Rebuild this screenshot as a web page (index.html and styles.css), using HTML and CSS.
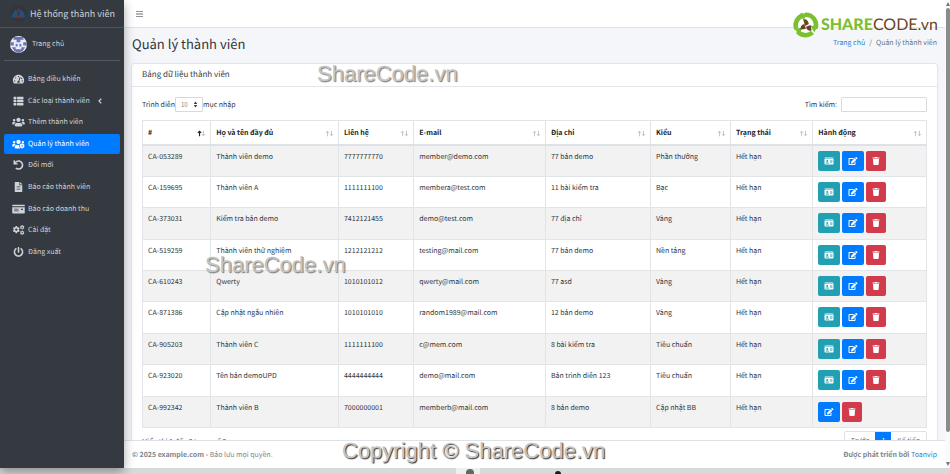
FILE: index.html
```html
<!DOCTYPE html>
<html lang="vi">
<head>
<meta charset="utf-8">
<meta name="viewport" content="width=device-width, initial-scale=1">
<title>Quản lý thành viên</title>
<link rel="stylesheet" href="styles.css">
</head>
<body>
<svg class="sprite" aria-hidden="true">
  <symbol id="i-bars" viewBox="0 0 448 512"><path d="M0 76h448v50H0zM0 231h448v50H0zM0 386h448v50H0z"/></symbol>
  <symbol id="i-dash" viewBox="0 0 576 512"><path fill-rule="evenodd" d="M288 32C129 32 0 161 0 320c0 53 14 102 39 145 6 9 16 15 27 15h444c11 0 21-6 27-15 25-43 39-92 39-145C576 161 447 32 288 32zm0 64c18 0 32 14 32 32s-14 32-32 32-32-14-32-32 14-32 32-32zM96 384c-18 0-32-14-32-32s14-32 32-32 32 14 32 32-14 32-32 32zm48-160c-18 0-32-14-32-32s14-32 32-32 32 14 32 32-14 32-32 32zm247-40l-61 184c14 12 22 29 22 48 0 12-3 23-9 32H233c-6-9-9-20-9-32 0-34 27-62 61-64l60-183c10-30 56-16 46 15zm23 58l15-46c21-11 51 4 51 28 0 30-41 43-66 18zm66 142c-18 0-32-14-32-32s14-32 32-32 32 14 32 32-14 32-32 32z"/></symbol>
  <symbol id="i-list" viewBox="0 0 512 512"><path d="M24 32h101q24 0 24 24v80q0 24-24 24H24q-24 0-24-24V56q0-24 24-24zM206 32h282q24 0 24 24v80q0 24-24 24H206q-24 0-24-24V56q0-24 24-24zM24 192h101q24 0 24 24v80q0 24-24 24H24q-24 0-24-24v-80q0-24 24-24zM206 192h282q24 0 24 24v80q0 24-24 24H206q-24 0-24-24v-80q0-24 24-24zM24 352h101q24 0 24 24v80q0 24-24 24H24q-24 0-24-24v-80q0-24 24-24zM206 352h282q24 0 24 24v80q0 24-24 24H206q-24 0-24-24v-80q0-24 24-24z"/></symbol>
  <symbol id="i-users" viewBox="0 0 640 512"><path d="M96 224c35.300 0 64-28.700 64-64s-28.700-64-64-64-64 28.700-64 64 28.700 64 64 64zm448 0c35.300 0 64-28.700 64-64s-28.700-64-64-64-64 28.700-64 64 28.700 64 64 64zm32 32h-64c-17.600 0-33.500 7.100-45.100 18.600 40.300 22.100 68.900 62 75.100 109.400h66c17.700 0 32-14.300 32-32v-32c0-35.300-28.700-64-64-64zm-256 0c61.900 0 112-50.100 112-112S381.900 32 320 32 208 82.100 208 144s50.100 112 112 112zm76.800 32h-8.300c-20.800 10-43.900 16-68.500 16s-47.600-6-68.500-16h-8.300C179.600 288 128 339.600 128 403.200V432c0 26.500 21.500 48 48 48h288c26.500 0 48-21.500 48-48v-28.800c0-63.600-51.600-115.200-115.200-115.200zm-223.700-13.400C161.500 263.100 145.600 256 128 256H64c-35.300 0-64 28.700-64 64v32c0 17.700 14.300 32 32 32h65.900c6.300-47.400 34.900-87.300 75.200-109.400z"/></symbol>
  <symbol id="i-users-cog" viewBox="0 0 640 512"><path d="M96 224a64 64 0 1 0 0-128 64 64 0 0 0 0 128zM320 256a112 112 0 1 0 0-224 112 112 0 0 0 0 224zM544 224a64 64 0 1 0 0-128 64 64 0 0 0-62 80q30 18 62 48zM173 275q-18-19-45-19H64q-64 0-64 64v32q0 32 32 32h66q10-72 75-109zM243 288q-115 0-115 115v29q0 48 48 48h240q-40-30-38-75-50-20-20-80l25-32q-63 20-140-5z"/><path fill-rule="evenodd" d="M478 222h52l8 36 26 15 35-11 31 55-27 25v30l27 25-31 55-35-11-26 15-8 36h-52l-8-36-26-15-35 11-31-55 27-25v-30l-27-25 31-55 35 11 26-15zm26 95a40 40 0 1 0 0 80 40 40 0 0 0 0-80z"/></symbol>
  <symbol id="i-undo" viewBox="0 0 512 512"><path d="M0 12h72v92C116 47 178 8 256 8c137 0 248 111 248 248S393 504 256 504c-64 0-122-24-166-64l58-58c28 26 66 40 108 40 92 0 166-74 166-166S348 90 256 90c-56 0-102 28-132 72h94v72H0z"/></symbol>
  <symbol id="i-file" viewBox="0 0 384 512"><path fill-rule="evenodd" d="M224 136V0H24C10.700 0 0 10.700 0 24v464c0 13.300 10.700 24 24 24h336c13.300 0 24-10.700 24-24V160H248c-13.200 0-24-10.800-24-24zM96 224h192v32H96zM96 288h192v32H96zM96 352h192v32H96zM384 122v6H256V0h6q10 0 17 7l98 98q7 7 7 17z"/></symbol>
  <symbol id="i-check" viewBox="0 0 640 512"><path fill-rule="evenodd" d="M0 448q0 32 32 32h576q32 0 32-32V160H0zM96 240h224v40H96zM448 240h96v70h-96zM96 336h240v36H96zM24 32h592q24 0 24 24v56H0V56q0-24 24-24z"/></symbol>
  <symbol id="i-cogs" viewBox="0 0 640 512"><path fill-rule="evenodd" d="M170 50h76l10 55 38 22 52-18 38 66-42 36v50l42 36-38 66-52-18-38 22-10 55h-76l-10-55-38-22-52 18-38-66 42-36v-50l-42-36 38-66 52 18 38-22zm38 126a60 60 0 1 0 0 120 60 60 0 0 0 0-120zM487 0h42l8 34 24 14 34-11 22 38-25 24v28l25 24-22 38-34-11-24 14-8 34h-42l-8-34-24-14-34 11-22-38 25-24V99l-25-24 22-38 34 11 24-14zm21 78a35 35 0 1 0 0 70 35 35 0 0 0 0-70zM487 286h42l8 34 24 14 34-11 22 38-25 24v28l25 24-22 38-34-11-24 14-8 34h-42l-8-34-24-14-34 11-22-38 25-24v-28l-25-24 22-38 34 11 24-14zm21 78a35 35 0 1 0 0 70 35 35 0 0 0 0-70z"/></symbol>
  <symbol id="i-power" viewBox="0 0 512 512"><path d="M400 54.100c63 45 104 118.600 104 201.900 0 136.800-110.800 247.700-247.500 248C120 504.300 8.200 393 8 256.400 7.900 173.100 48.900 99.300 111.800 54.200c11.700-8.300 28-4.800 35 7.700L162.600 90c5.900 10.500 3.100 23.800-6.600 31-41.500 30.800-68 79.600-68 134.900-.1 92.300 74.500 168.100 168 168.100 91.600 0 168.600-74.200 168-169.100-.3-51.800-24.700-101.800-68.100-134-9.700-7.200-12.400-20.500-6.500-30.900l15.800-28.100c7-12.400 23.200-16.100 34.800-7.800zM296 264V24c0-13.300-10.700-24-24-24h-32c-13.300 0-24 10.700-24 24v240c0 13.300 10.700 24 24 24h32c13.300 0 24-10.700 24-24z"/></symbol>
  <symbol id="i-left" viewBox="0 0 256 512"><path d="M180 80l56 56-120 120 120 120-56 56L10 256z"/></symbol>
  <symbol id="i-card" viewBox="0 0 576 512"><path fill-rule="evenodd" d="M48 32h480q48 0 48 48v16H0V80q0-48 48-48zM0 128h576v304q0 48-48 48H48q-48 0-48-48zm176 64a64 64 0 1 0 0 128 64 64 0 0 0 0-128zM64 416h224q0-72-64-72h-96q-64 0-64 72zM352 192h160v36H352zM352 256h160v36H352zM352 320h160v36H352z"/></symbol>
  <symbol id="i-edit" viewBox="0 0 576 512"><path d="M402.600 83.200l90.200 90.200c3.800 3.800 3.800 10 0 13.800L274.400 405.600l-92.800 10.300c-12.400 1.400-22.900-9.100-21.500-21.500l10.300-92.800L388.800 83.200c3.800-3.800 10-3.800 13.800 0zm162-22.900l-48.800-48.800c-15.200-15.200-39.900-15.200-55.200 0l-35.400 35.400c-3.800 3.800-3.800 10 0 13.800l90.200 90.200c3.800 3.800 10 3.800 13.800 0l35.400-35.400c15.200-15.300 15.200-40 0-55.200zM384 346.200V448H64V128h229.800c3.200 0 6.200-1.300 8.500-3.500l40-40c7.600-7.600 2.200-20.500-8.500-20.500H48C21.500 64 0 85.500 0 112v352c0 26.500 21.500 48 48 48h352c26.500 0 48-21.500 48-48V306.200c0-10.700-12.900-16-20.500-8.500l-40 40c-2.200 2.300-3.500 5.300-3.500 8.500z"/></symbol>
  <symbol id="i-trash" viewBox="0 0 448 512"><path d="M432 32H312l-9.400-18.700A24 24 0 0 0 281.100 0H166.800a23.720 23.720 0 0 0-21.400 13.300L136 32H16A16 16 0 0 0 0 48v32a16 16 0 0 0 16 16h416a16 16 0 0 0 16-16V48a16 16 0 0 0-16-16zM53.200 467a48 48 0 0 0 47.900 45h245.800a48 48 0 0 0 47.900-45L416 128H32z"/></symbol>
  <symbol id="i-sort" viewBox="0 0 16 12"><path d="M4.500 11V2M1.500 5l3-3 3 3"/><path d="M11.500 1v9M8.500 7l3 3 3-3"/></symbol>
  <symbol id="i-sort-up" viewBox="0 0 16 12"><path d="M4.500 11V2M1.500 5l3-3 3 3" stroke="#222" stroke-width="2"/><path d="M11.500 1v9M8.500 7l3 3 3-3"/></symbol>
</svg>

<div class="screen">
  <div class="app">
    <aside class="sidebar">
      <a class="brand" href="#">
        <svg class="brand-logo" viewBox="0 0 32 32" aria-hidden="true"><circle cx="16" cy="16" r="15" fill="#30363d"/><path d="M11 8l4 7-3 9-9-1q1-8 8-15z" fill="#24507f"/><path d="M21 8l-4 7 3 9 9-1q-1-8-8-15z" fill="#24507f"/><path d="M13 7h6l-3 8zM9 24l6-7 1 8zM23 24l-6-7-1 8z" fill="#70353c"/></svg>
        <span>Hệ thống thành viên</span>
      </a>
      <a class="user" href="#">
        <svg class="avatar" viewBox="0 0 36 36" aria-hidden="true"><circle cx="18" cy="18" r="18" fill="#e9ebf5"/><path d="M9 2h18l2 6h-7v5h-8V8H7zM1 13h7v7H0zM28 13h7l1 7h-8zM12 17h4v5h-4zM20 17h4v5h-4zM4 24h8v4h12v-4h8l-5 8-9 4-9-4z" fill="#6974b8"/></svg>
        <span>Trang chủ</span>
      </a>
      <nav>
        <ul class="menu">
          <li><a href="#"><svg><use href="#i-dash"/></svg><span>Bảng điều khiển</span></a></li>
          <li><a href="#"><svg><use href="#i-list"/></svg><span>Các loại thành viên</span><svg class="caret"><use href="#i-left"/></svg></a></li>
          <li><a href="#"><svg><use href="#i-users"/></svg><span>Thêm thành viên</span></a></li>
          <li><a class="active" href="#"><svg><use href="#i-users-cog"/></svg><span>Quản lý thành viên</span></a></li>
          <li><a href="#"><svg><use href="#i-undo"/></svg><span>Đổi mới</span></a></li>
          <li><a href="#"><svg><use href="#i-file"/></svg><span>Báo cáo thành viên</span></a></li>
          <li><a href="#"><svg><use href="#i-check"/></svg><span>Báo cáo doanh thu</span></a></li>
          <li><a href="#"><svg><use href="#i-cogs"/></svg><span>Cài đặt</span></a></li>
          <li><a href="#"><svg><use href="#i-power"/></svg><span>Đăng xuất</span></a></li>
        </ul>
      </nav>
    </aside>

    <div class="page">
      <header class="topbar">
        <button class="toggle" type="button" aria-label="Menu"><svg><use href="#i-bars"/></svg></button>
      </header>
      <main class="content">
        <div class="heading">
          <h1>Quản lý thành viên</h1>
          <div class="crumbs"><a href="#">Trang chủ</a><span>/</span><span>Quản lý thành viên</span></div>
        </div>
        <section class="card">
          <h2>Bảng dữ liệu thành viên</h2>
          <div class="card-body">
            <div class="controls">
              <div class="length">
                <label for="length">Trình diễn</label>
                <span class="select"><select id="length"><option>10</option><option>25</option></select><svg viewBox="0 0 8 12" aria-hidden="true"><path d="M4 1l3 4H1zM4 11l3-4H1z"/></svg></span>
                <span>mục nhập</span>
              </div>
              <div class="search"><label for="search">Tìm kiếm:</label><input id="search" type="search"></div>
            </div>
            <table>
              <colgroup><col class="c-id"><col class="c-name"><col class="c-phone"><col class="c-mail"><col class="c-addr"><col class="c-type"><col class="c-state"><col class="c-act"></colgroup>
              <thead><tr>
                <th><div>#<svg><use href="#i-sort-up"/></svg></div></th>
                <th><div>Họ và tên đầy đủ<svg><use href="#i-sort"/></svg></div></th>
                <th><div>Liên hệ<svg><use href="#i-sort"/></svg></div></th>
                <th><div>E-mail<svg><use href="#i-sort"/></svg></div></th>
                <th><div>Địa chỉ<svg><use href="#i-sort"/></svg></div></th>
                <th><div>Kiểu<svg><use href="#i-sort"/></svg></div></th>
                <th><div>Trạng thái<svg><use href="#i-sort"/></svg></div></th>
                <th><div>Hành động<svg><use href="#i-sort"/></svg></div></th>
              </tr></thead>
              <tbody>
                <tr><td>CA-053289</td><td>Thành viên demo</td><td>7777777770</td><td>member@demo.com</td><td>77 bản demo</td><td>Phần thưởng</td><td>Hết hạn</td><td><div class="actions"><button type="button" class="info" aria-label="Thẻ"><svg><use href="#i-card"/></svg></button><button type="button" class="edit" aria-label="Sửa"><svg><use href="#i-edit"/></svg></button><button type="button" class="delete" aria-label="Xóa"><svg><use href="#i-trash"/></svg></button></div></td></tr>
                <tr><td>CA-159695</td><td>Thành viên A</td><td>1111111100</td><td>membera@test.com</td><td>11 bài kiểm tra</td><td>Bạc</td><td>Hết hạn</td><td><div class="actions"><button type="button" class="info" aria-label="Thẻ"><svg><use href="#i-card"/></svg></button><button type="button" class="edit" aria-label="Sửa"><svg><use href="#i-edit"/></svg></button><button type="button" class="delete" aria-label="Xóa"><svg><use href="#i-trash"/></svg></button></div></td></tr>
                <tr><td>CA-373031</td><td>Kiểm tra bản demo</td><td>7412121455</td><td>demo@test.com</td><td>77 địa chỉ</td><td>Vàng</td><td>Hết hạn</td><td><div class="actions"><button type="button" class="info" aria-label="Thẻ"><svg><use href="#i-card"/></svg></button><button type="button" class="edit" aria-label="Sửa"><svg><use href="#i-edit"/></svg></button><button type="button" class="delete" aria-label="Xóa"><svg><use href="#i-trash"/></svg></button></div></td></tr>
                <tr><td>CA-519259</td><td>Thành viên thử nghiệm</td><td>1212121212</td><td>testing@mail.com</td><td>77 bản demo</td><td>Nền tảng</td><td>Hết hạn</td><td><div class="actions"><button type="button" class="info" aria-label="Thẻ"><svg><use href="#i-card"/></svg></button><button type="button" class="edit" aria-label="Sửa"><svg><use href="#i-edit"/></svg></button><button type="button" class="delete" aria-label="Xóa"><svg><use href="#i-trash"/></svg></button></div></td></tr>
                <tr><td>CA-610243</td><td>Qwerty</td><td>1010101012</td><td>qwerty@mail.com</td><td>77 asd</td><td>Vàng</td><td>Hết hạn</td><td><div class="actions"><button type="button" class="info" aria-label="Thẻ"><svg><use href="#i-card"/></svg></button><button type="button" class="edit" aria-label="Sửa"><svg><use href="#i-edit"/></svg></button><button type="button" class="delete" aria-label="Xóa"><svg><use href="#i-trash"/></svg></button></div></td></tr>
                <tr><td>CA-871386</td><td>Cập nhật ngẫu nhiên</td><td>1010101010</td><td>random1989@mail.com</td><td>12 bản demo</td><td>Vàng</td><td>Hết hạn</td><td><div class="actions"><button type="button" class="info" aria-label="Thẻ"><svg><use href="#i-card"/></svg></button><button type="button" class="edit" aria-label="Sửa"><svg><use href="#i-edit"/></svg></button><button type="button" class="delete" aria-label="Xóa"><svg><use href="#i-trash"/></svg></button></div></td></tr>
                <tr><td>CA-905203</td><td>Thành viên C</td><td>1111111100</td><td>c@mem.com</td><td>8 bài kiểm tra</td><td>Tiêu chuẩn</td><td>Hết hạn</td><td><div class="actions"><button type="button" class="info" aria-label="Thẻ"><svg><use href="#i-card"/></svg></button><button type="button" class="edit" aria-label="Sửa"><svg><use href="#i-edit"/></svg></button><button type="button" class="delete" aria-label="Xóa"><svg><use href="#i-trash"/></svg></button></div></td></tr>
                <tr><td>CA-923020</td><td>Tên bản demoUPD</td><td>4444444444</td><td>demo@mail.com</td><td>Bản trình diễn 123</td><td>Tiêu chuẩn</td><td>Hết hạn</td><td><div class="actions"><button type="button" class="info" aria-label="Thẻ"><svg><use href="#i-card"/></svg></button><button type="button" class="edit" aria-label="Sửa"><svg><use href="#i-edit"/></svg></button><button type="button" class="delete" aria-label="Xóa"><svg><use href="#i-trash"/></svg></button></div></td></tr>
                <tr><td>CA-992342</td><td>Thành viên B</td><td>7000000001</td><td>memberb@mail.com</td><td>8 bản demo</td><td>Cập nhật BB</td><td>Hết hạn</td><td><div class="actions"><button type="button" class="edit" aria-label="Sửa"><svg><use href="#i-edit"/></svg></button><button type="button" class="delete" aria-label="Xóa"><svg><use href="#i-trash"/></svg></button></div></td></tr>
              </tbody>
            </table>
            <div class="table-foot">
              <div class="summary">Hiển thị 1 đến 9 trong số 9 mục</div>
              <div class="pager"><a href="#">Trước</a><a class="current" href="#">1</a><a href="#">Kế tiếp</a></div>
            </div>
          </div>
        </section>
      </main>
      <footer class="footer">
        <div><strong>© 2025 example.com -</strong> Bảo lưu mọi quyền.</div>
        <div><strong>Được phát triển bởi</strong> <a href="#">Toanvip</a></div>
      </footer>
    </div>
    <div class="scrollbar" aria-hidden="true"><i class="arrow-up"></i><i class="thumb"></i><i class="arrow-down"></i></div>
  </div>
  <div class="taskbar" aria-hidden="true"><svg viewBox="0 0 120 6"><path d="M0 0h24v6H0z" fill="#eee"/><circle cx="14" cy="5" r="4" fill="#5d6b58"/><circle cx="102" cy="6" r="3" fill="#1c1c1c"/></svg></div>

  <div class="sharecode">
    <svg viewBox="0 0 28 28" aria-hidden="true"><circle cx="14" cy="14" r="14" fill="#fff"/><g fill="none" stroke="#7bc030" stroke-width="5"><path d="M3.500 18A11 11 0 0 1 10 4"/><path d="M13 3A11 11 0 0 1 24 18"/><path d="M21 22A11 11 0 0 1 5 21"/></g><path d="M8 1l8 1-5 7zM27 14l-4 8-4-7zM1 18l8-1-1 8z" fill="#7bc030"/><path d="M11 8q5-1 6 5l-4 2zM8 19q0-5 4-6l2 5zM20 20q-5 1-6-4l5-2z" fill="#6b4423"/></svg>
    <span><b>SHARE</b>CODE.vn</span>
  </div>
  <div class="mark mark-top">ShareCode.vn</div>
  <div class="mark mark-mid">ShareCode.vn</div>
  <div class="mark mark-bottom">Copyright © ShareCode.vn</div>
</div>
</body>
</html>
```
FILE: styles.css
```css
* { box-sizing: border-box; }
body {
  margin: 0;
  font-family: "Noto Sans CJK JP", "Noto Sans", sans-serif;
  font-size: 7px;
  line-height: 12px;
  color: #33373c;
  text-rendering: geometricPrecision;
}
a { color: #3182ce; text-decoration: none; }
svg { display: block; fill: currentColor; }
button, input, select { font: inherit; color: inherit; }
button { cursor: pointer; }
.sprite { position: absolute; width: 0; height: 0; }

.screen { position: relative; display: flex; flex-direction: column; height: 100vh; overflow: hidden; }
.app { flex: 1; min-height: 0; display: flex; }

/* Sidebar */
.sidebar { flex: none; width: 124px; background: #343a40; color: #ced3da; box-shadow: 0 4px 10px rgba(0, 0, 0, .35); z-index: 1; }
.sidebar a { color: inherit; }
.brand { display: flex; align-items: center; gap: 3px; height: 28px; padding-left: 10px; border-bottom: 1px solid #4b545c; font-size: 9px; white-space: nowrap; }
.brand-logo { width: 17px; height: 17px; }
.user { display: flex; align-items: center; gap: 5px; height: 33px; margin: 0 4px; padding-left: 6px; border-bottom: 1px solid #4f5962; }
.avatar { width: 17px; height: 17px; }
.menu { list-style: none; margin: 8px 4px 0; padding: 0; height: 193px; display: grid; grid-auto-rows: 1fr; gap: 1px; }
.menu a { display: flex; align-items: center; gap: 3px; height: 100%; padding-left: 8px; border-radius: 2px; white-space: nowrap; }
.menu svg { width: 13px; height: 10px; }
.menu .caret { width: 8px; height: 8px; margin-left: 3px; }
.menu .active { background: #007bff; color: #fff; }

/* Page */
.page { flex: 1; min-width: 0; display: flex; flex-direction: column; background: #f4f6f9; }
.topbar { flex: none; display: flex; align-items: center; height: 28px; padding-left: 12px; background: #fff; border-bottom: 1px solid #dee2e6; }
.toggle { padding: 0; border: 0; background: none; color: #6c7075; }
.toggle svg { width: 7px; height: 8px; }
.content { flex: 1; min-height: 0; overflow: hidden; padding: 0 8px; }
.heading { display: flex; justify-content: space-between; align-items: center; height: 36px; }
h1 { margin: 0; padding-bottom: 4px; font-size: 13px; line-height: 20px; font-weight: 400; }
.crumbs { display: flex; gap: 4px; padding-bottom: 7px; color: #6c757d; }
.card { background: #fff; border-radius: 2px; box-shadow: 0 0 2px rgba(0, 0, 0, .25); }
h2 { margin: 0; padding: 5px 10px; font-size: 8px; line-height: 12px; font-weight: 400; border-bottom: 1px solid #e3e5e7; }
.card-body { padding: 10px; }
.controls { display: flex; justify-content: space-between; align-items: center; height: 15px; margin-bottom: 8px; }
.length, .search { display: flex; align-items: center; }
.select { position: relative; }
.select select { display: block; appearance: none; width: 28px; height: 15px; padding: 0 0 0 5px; border: 1px solid #d5d9dd; border-radius: 1px; background: #fff; color: #888; font-size: 6px; }
.select svg { position: absolute; right: 5px; top: 4px; width: 5px; height: 7px; color: #343a40; pointer-events: none; }
.search { gap: 4px; }
.search input { width: 86px; height: 15px; padding: 0 4px; border: 1px solid #d9dcdf; border-radius: 1px; background: #fff; }

table { width: 100%; height: 308px; border-collapse: collapse; table-layout: fixed; }
th, td { border: 1px solid #e2e5e8; padding: 5px; text-align: left; vertical-align: top; white-space: nowrap; }
th { height: 24px; padding: 6px 4px 4px 5px; border-bottom: 2px solid #dee2e6; font-weight: 700; color: #212529; }
th div { display: flex; justify-content: space-between; align-items: center; }
th svg { width: 9px; height: 7px; fill: none; stroke: #b8bcc0; stroke-width: 1.500; }
tbody tr:nth-child(odd) { background: #f2f2f2; }
.c-id { width: 8.700%; }
.c-name { width: 16.300%; }
.c-phone { width: 9.600%; }
.c-mail { width: 16.800%; }
.c-addr { width: 13.400%; }
.c-type { width: 10.200%; }
.c-state { width: 10.500%; }
.c-act { width: 14.500%; }
.actions { display: flex; gap: 2px; }
.actions button { display: grid; place-items: center; width: 22px; height: 20px; padding: 0; border: 0; border-radius: 2px; color: #fff; }
.actions svg { width: 10px; height: 8px; }
.actions .info { background: #219fb3; }
.actions .edit { background: #007bff; }
.actions .delete { width: 20px; background: #d13b4b; }

.table-foot { display: flex; justify-content: space-between; margin-top: 3px; }
.summary { padding-top: 5px; }
.pager { display: flex; height: 20px; border: 1px solid #dee2e6; border-radius: 2px; }
.pager a { padding: 3px 6px; color: #6c757d; }
.pager .current { background: #007bff; color: #fff; }

.footer { flex: none; display: flex; justify-content: space-between; align-items: center; height: 28px; padding: 0 8px; background: #fff; border-top: 1px solid #dee2e6; color: #7b858e; }

/* Window chrome */
.scrollbar { flex: none; width: 5px; display: flex; flex-direction: column; align-items: center; gap: 2px; padding: 2px 0; background: #fafafa; }
.thumb { width: 4px; flex: 1; margin-bottom: 28px; background: #8b8b8b; border-radius: 2px; }
.arrow-up, .arrow-down { border: 2px solid transparent; }
.arrow-up { border-top: 0; border-bottom: 4px solid #777; }
.arrow-down { border-bottom: 0; border-top: 4px solid #777; }
.taskbar { flex: none; height: 6px; background: #d9d9d9; }
.taskbar svg { width: 120px; height: 6px; margin-left: 48%; }

/* Overlays */
.sharecode { position: absolute; right: 12px; top: 11px; display: flex; align-items: center; gap: 2px; font-family: Lato, sans-serif; font-size: 16px; line-height: 28px; color: #6b4423; text-shadow: 0 0 2px #fff, 0 0 3px #fff; z-index: 2; }
.sharecode svg { width: 26px; height: 26px; }
.sharecode b { font-weight: 900; color: #7bc030; }
.mark { position: absolute; font-family: "Liberation Sans", sans-serif; font-size: 22px; line-height: 24px; color: #c4c4c4; text-shadow: 1px 1px 1px #777; white-space: nowrap; pointer-events: none; z-index: 3; }
.mark-top { left: 317px; top: 62px; }
.mark-mid { left: 205px; top: 253px; }
.mark-bottom { left: 342px; top: 439px; text-shadow: 1px 1px 1px #333; }
```
